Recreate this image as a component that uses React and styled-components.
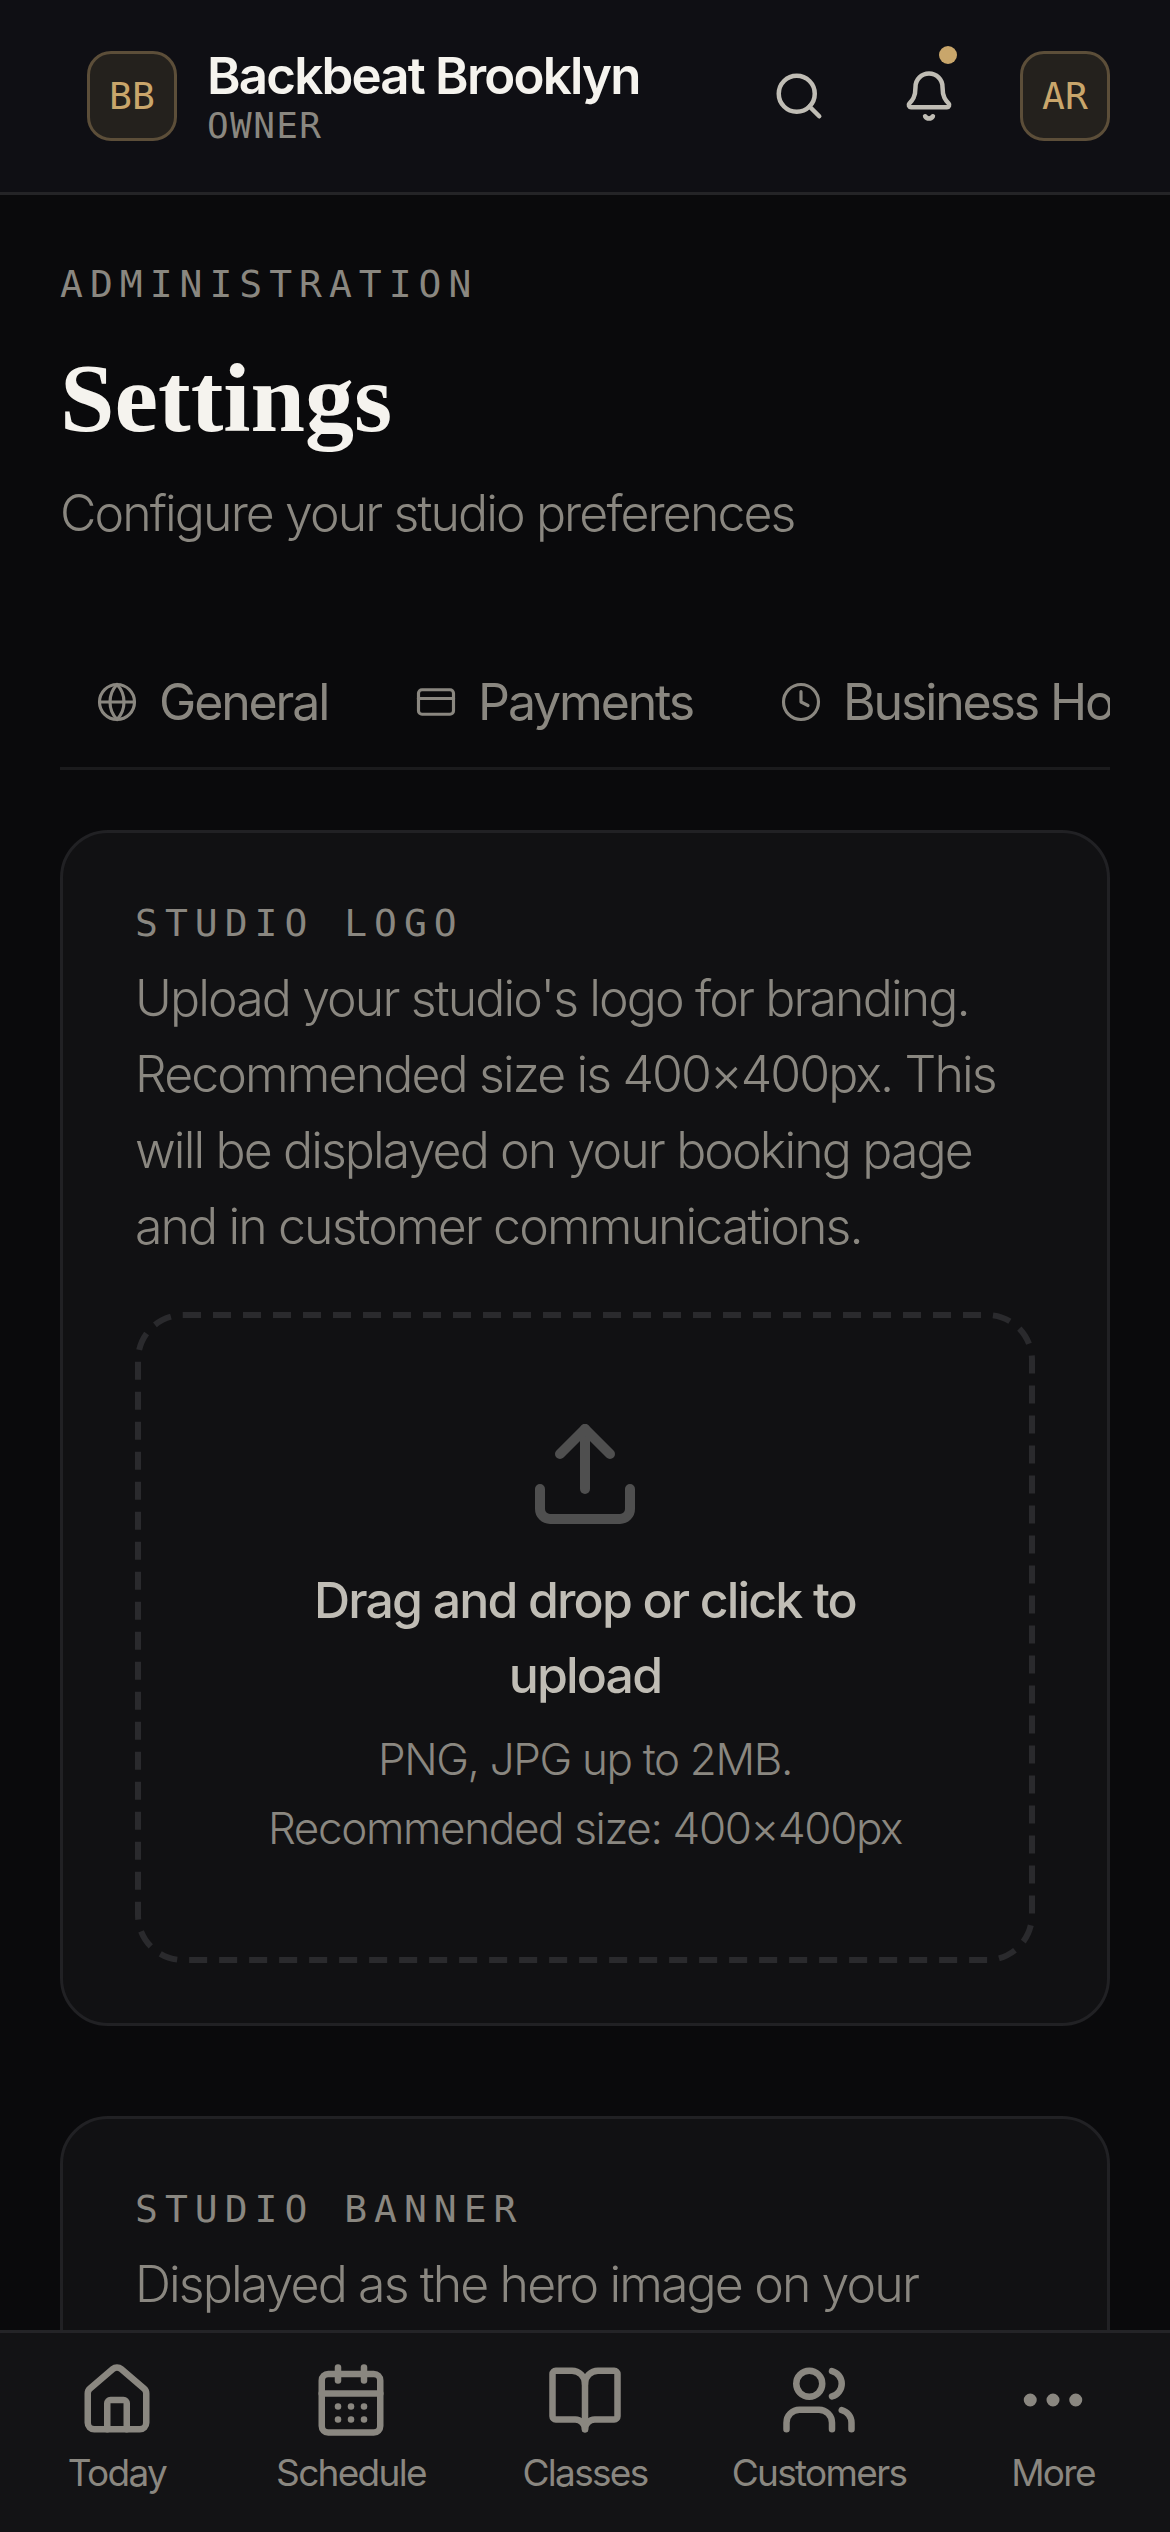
import styled, { createGlobalStyle } from "styled-components";
import { Search, Bell, Globe, CreditCard, Clock, Upload, House, CalendarDays, BookOpen, Users, Ellipsis } from "lucide-react";

const sans = `Inter, "Liberation Sans", sans-serif`;
const mono = `"DejaVu Sans Mono", "Liberation Mono", monospace`;
const serif = `"Liberation Serif", serif`;

const GlobalStyle = createGlobalStyle`
  html, body {
    margin: 0;
    padding: 0;
    background: #0a0a0c;
  }
  * {
    box-sizing: border-box;
  }
`;

const Page = styled.div`
  width: 1170px;
  height: 2532px;
  display: flex;
  flex-direction: column;
  overflow: hidden;
  background: #0a0a0c;
  font-family: ${sans};
`;

const TopBar = styled.header`
  flex: none;
  height: 195px;
  display: flex;
  align-items: center;
  justify-content: space-between;
  padding: 0 60px 0 87px;
  background: #0f0f14;
  border-bottom: 3px solid #242427;
`;

const Brand = styled.div`
  display: flex;
  align-items: center;
  gap: 30px;
`;

const Badge = styled.div`
  width: 90px;
  height: 90px;
  display: flex;
  align-items: center;
  justify-content: center;
  border: 3px solid #5c4e39;
  border-radius: 24px;
  background: #24211d;
  color: #c9a66b;
  font-family: ${mono};
  font-size: 38px;
`;

const BrandText = styled.div`
  display: flex;
  flex-direction: column;
`;

const StudioName = styled.div`
  color: #f5f3ee;
  font-size: 51px;
  font-weight: 600;
  line-height: 60px;
  letter-spacing: -1.8px;
`;

const Role = styled.div`
  color: #8a8780;
  font-family: ${mono};
  font-size: 36px;
  line-height: 40px;
  letter-spacing: 1.4px;
`;

const TopActions = styled.div`
  display: flex;
  align-items: center;
  gap: 52px;
`;

const IconButton = styled.button`
  position: relative;
  width: 78px;
  height: 60px;
  padding: 0;
  display: flex;
  align-items: center;
  justify-content: center;
  border: 0;
  background: none;
  color: #c0bdb5;
`;

const Dot = styled.span`
  position: absolute;
  top: -20px;
  right: 11px;
  width: 18px;
  height: 18px;
  border-radius: 50%;
  background: #c9a66b;
`;

const Main = styled.main`
  flex: 1;
  min-height: 0;
  overflow: hidden;
  padding: 66px 60px 0;
`;

const Eyebrow = styled.div`
  color: #8a8780;
  font-family: ${mono};
  font-size: 38px;
  line-height: 46px;
  letter-spacing: 7px;
`;

const Title = styled.h1`
  margin: 37px 0 0;
  color: #f5f3ee;
  font-family: ${serif};
  font-size: 98px;
  font-weight: 700;
  line-height: 108px;
`;

const Subtitle = styled.p`
  margin: 25px 0 0;
  color: #8a8780;
  font-size: 50px;
  font-weight: 350;
  line-height: 72px;
  letter-spacing: -1.9px;
`;

const Tabs = styled.nav`
  margin-top: 98px;
  display: flex;
  gap: 15px;
  overflow: hidden;
  border-bottom: 3px solid #1b1b1d;
`;

const Tab = styled.div`
  flex: none;
  display: flex;
  align-items: center;
  gap: 21px;
  padding: 25px 36px 35px;
  color: #8a8780;
  font-size: 50px;
  line-height: 60px;
  letter-spacing: -2.15px;
`;

const Card = styled.section`
  margin-top: 60px;
  padding: 66px 72px 60px;
  background: #111113;
  border: 3px solid #212124;
  border-radius: 48px;
  & + & {
    margin-top: 90px;
  }
`;

const CardTitle = styled.h2`
  margin: 0;
  color: #8a8780;
  font-family: ${mono};
  font-size: 38px;
  font-weight: 400;
  line-height: 48px;
  letter-spacing: 7px;
`;

const CardText = styled.p`
  margin: 13px 0 0;
  color: #8a8780;
  font-size: 50px;
  font-weight: 350;
  line-height: 76px;
  letter-spacing: -1.88px;
`;

const DropZone = styled.div`
  position: relative;
  margin-top: 48px;
  height: 651px;
  padding-top: 102px;
  display: flex;
  flex-direction: column;
  align-items: center;
  text-align: center;
  color: #4f4f4f;
`;

const DashedEdge = styled.svg`
  position: absolute;
  inset: 0;
  width: 100%;
  height: 100%;
  fill: none;
  stroke: #2a2a2d;
  stroke-width: 6;
  stroke-dasharray: 18 12;
`;

const DropTitle = styled.div`
  margin-top: 29px;
  width: 600px;
  color: #c0bdb5;
  font-size: 50px;
  font-weight: 500;
  line-height: 75px;
  letter-spacing: -1.85px;
`;

const DropHint = styled.div`
  margin-top: 12px;
  color: #8a8780;
  font-size: 44px;
  font-weight: 350;
  line-height: 69px;
  letter-spacing: -1.35px;
`;

const BottomNav = styled.nav`
  flex: none;
  height: 202px;
  display: grid;
  grid-template-columns: repeat(5, 1fr);
  background: #131315;
  border-top: 3px solid #242427;
`;

const NavItem = styled.div`
  padding-top: 28px;
  display: flex;
  flex-direction: column;
  align-items: center;
  gap: 10px;
  color: #8a8780;
  font-size: 37px;
  line-height: 48px;
  letter-spacing: -1.7px;
`;

const tabs = [
  { label: "General", icon: Globe },
  { label: "Payments", icon: CreditCard },
  { label: "Business Hours", icon: Clock },
];

const navItems = [
  { label: "Today", icon: House },
  { label: "Schedule", icon: CalendarDays },
  { label: "Classes", icon: BookOpen },
  { label: "Customers", icon: Users },
  { label: "More", icon: Ellipsis },
];

function App() {
  return (
    <Page>
      <GlobalStyle />
      <TopBar>
        <Brand>
          <Badge>BB</Badge>
          <BrandText>
            <StudioName>Backbeat Brooklyn</StudioName>
            <Role>OWNER</Role>
          </BrandText>
        </Brand>
        <TopActions>
          <IconButton>
            <Search size={54} strokeWidth={2} />
          </IconButton>
          <IconButton>
            <Bell size={54} strokeWidth={2} />
            <Dot />
          </IconButton>
          <Badge>AR</Badge>
        </TopActions>
      </TopBar>
      <Main>
        <Eyebrow>ADMINISTRATION</Eyebrow>
        <Title>Settings</Title>
        <Subtitle>Configure your studio preferences</Subtitle>
        <Tabs>
          {tabs.map(({ label, icon: Icon }) => (
            <Tab key={label}>
              <Icon size={42} strokeWidth={1.8} />
              {label}
            </Tab>
          ))}
        </Tabs>
        <Card>
          <CardTitle>STUDIO LOGO</CardTitle>
          <CardText>
            Upload your studio's logo for branding. Recommended size is 400×400px. This will be
            displayed on your booking page and in customer communications.
          </CardText>
          <DropZone>
            <DashedEdge>
              <rect x="3" y="3" width="894" height="645" rx="45" />
            </DashedEdge>
            <Upload size={120} strokeWidth={2} />
            <DropTitle>Drag and drop or click to upload</DropTitle>
            <DropHint>
              PNG, JPG up to 2MB.
              <br />
              Recommended size: 400×400px
            </DropHint>
          </DropZone>
        </Card>
        <Card>
          <CardTitle>STUDIO BANNER</CardTitle>
          <CardText>Displayed as the hero image on your booking page.</CardText>
        </Card>
      </Main>
      <BottomNav>
        {navItems.map(({ label, icon: Icon }) => (
          <NavItem key={label}>
            <Icon size={78} strokeWidth={2} />
            {label}
          </NavItem>
        ))}
      </BottomNav>
    </Page>
  );
}

export default App;
